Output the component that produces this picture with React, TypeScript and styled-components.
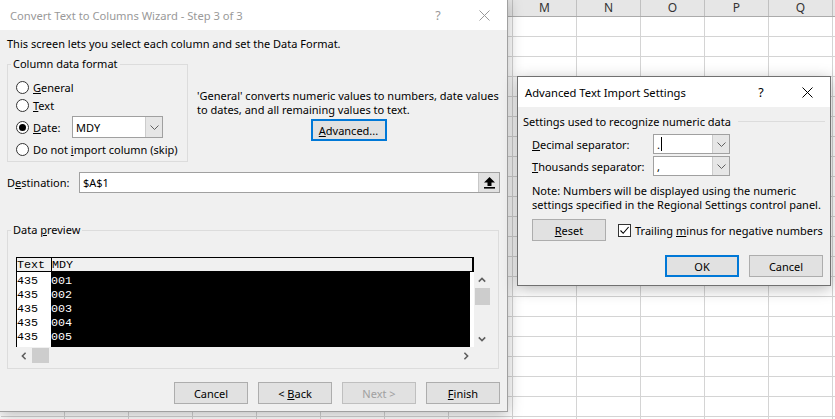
import React from "react";
import styled, { createGlobalStyle } from "styled-components";

const UI = `"Noto Sans", "Open Sans", "Liberation Sans", sans-serif`;
const MONO = `"Liberation Mono", "DejaVu Sans Mono", monospace`;

const GlobalStyle = createGlobalStyle`
  html, body { margin: 0; padding: 0; background: #ffffff; overflow: hidden; }
  body { font-family: ${UI}; font-size: 11px; color: #000; }
  *, *::before, *::after { box-sizing: border-box; }
`;

const Desktop = styled.div`
  position: relative;
  width: 835px;
  height: 419px;
  overflow: hidden;
  background: #fff;
`;

/* ---------- spreadsheet behind ---------- */
const Sheet = styled.div`
  display: flex;
  flex-direction: column;
  padding-left: 1px;
`;
const ColHeaderRow = styled.div`
  display: flex;
  height: 17px;
  background: #e6e6e6;
  border-bottom: 1px solid #ababab;
`;
const ColHeader = styled.div`
  flex: 0 0 64px;
  border-right: 1px solid #c0c0c0;
  text-align: center;
  font-size: 12px;
  line-height: 15px;
  color: #333;
`;
const SheetRow = styled.div`
  display: flex;
  height: 20px;
`;
const Cell = styled.div`
  flex: 0 0 64px;
  border-right: 1px solid #d4d4d4;
  border-bottom: 1px solid #d4d4d4;
`;

/* ---------- windows ---------- */
const Window = styled.div<{ $active?: boolean }>`
  position: absolute;
  display: flex;
  flex-direction: column;
  background: #f0f0f0;
  border: 1px solid ${(p) => (p.$active ? "#707070" : "#a0a0a0")};
  box-shadow: 0 3px 14px rgba(0, 0, 0, 0.28);
`;
const WizardWindow = styled(Window)`
  left: -1px;
  top: -1px;
  width: 509px;
  height: 413px;
`;
const AdvWindow = styled(Window)`
  left: 517px;
  top: 76px;
  width: 314px;
  height: 210px;
`;
const TitleBar = styled.div<{ $active?: boolean; $pad: number }>`
  flex: none;
  height: 30px;
  display: flex;
  align-items: center;
  background: #fff;
  padding-left: ${(p) => p.$pad}px;
  color: ${(p) => (p.$active ? "#000" : "#999")};
  font-size: 11.2px;
`;
const TitleText = styled.div`
  flex: 1;
  white-space: nowrap;
`;
const TitleButton = styled.div`
  width: 46px;
  height: 30px;
  display: flex;
  align-items: center;
  justify-content: center;
  font-size: 12.5px;
`;

const CloseIcon = ({ color }: { color: string }) => (
  <svg width="11" height="11" viewBox="0 0 11 11">
    <path d="M0.5 0.5 L10.5 10.5 M10.5 0.5 L0.5 10.5" stroke={color} strokeWidth="1" fill="none" />
  </svg>
);

/* ---------- common controls ---------- */
const Key = styled.span`
  text-decoration: underline;
  text-underline-offset: 1px;
`;
const PushButton = styled.button<{ $default?: boolean; $w?: number }>`
  flex: none;
  width: ${(p) => p.$w ?? 74}px;
  height: 22px;
  margin: 0;
  padding: 0;
  font: inherit;
  color: #000;
  background: #e1e1e1;
  border: ${(p) => (p.$default ? "2px solid #0078d7" : "1px solid #adadad")};
  &:disabled {
    color: #a0a0a0;
    border-color: #bfbfbf;
  }
`;
const GroupBox = styled.fieldset<{ $w: number }>`
  margin: 0;
  padding: 0;
  min-width: 0;
  width: ${(p) => p.$w}px;
  border: 1px solid #dcdcdc;
`;
const Legend = styled.legend`
  margin-left: 3px;
  padding: 0 2px;
  line-height: 16px;
  font-size: 11px;
`;
const Combo = styled.div<{ $w: number; $h: number }>`
  flex: none;
  display: flex;
  width: ${(p) => p.$w}px;
  height: ${(p) => p.$h}px;
  border: 1px solid #a0a0a0;
  background: #fff;
`;
const ComboText = styled.div`
  flex: 1;
  display: flex;
  align-items: center;
  padding-left: 3px;
`;
const ComboDrop = styled.div`
  flex: none;
  width: 17px;
  display: flex;
  align-items: center;
  justify-content: center;
  background: #e6e6e6;
  border-left: 1px solid #cccccc;
`;
const Caret = styled.span`
  display: inline-block;
  width: 1px;
  height: 14px;
  margin-left: 1px;
  background: #000;
`;

const Chevron = ({ dir, color = "#606060" }: { dir: "up" | "down" | "left" | "right"; color?: string }) => {
  const rot = { up: 0, right: 90, down: 180, left: 270 }[dir];
  return (
    <svg width="8" height="8" viewBox="0 0 8 8" style={{ transform: `rotate(${rot}deg)` }}>
      <path d="M0.8 5.6 L4 2.4 L7.2 5.6" stroke={color} strokeWidth="1.6" fill="none" />
    </svg>
  );
};
const ThinChevronDown = () => (
  <svg width="9" height="5" viewBox="0 0 9 5">
    <path d="M0.5 0.5 L4.5 4.5 L8.5 0.5" stroke="#606060" strokeWidth="1" fill="none" />
  </svg>
);

/* ---------- wizard ---------- */
const WizardBody = styled.div`
  flex: 1;
  display: flex;
  flex-direction: column;
  padding: 6px 7px 8px 7px;
`;
const Intro = styled.div`
  line-height: 16px;
  height: 16px;
  white-space: nowrap;
`;
const TopRow = styled.div`
  display: flex;
  align-items: flex-start;
  margin-top: 4px;
`;
const Options = styled.div`
  display: flex;
  flex-direction: column;
  padding: 6px 0 3px 8px;
`;
const OptionRow = styled.div<{ $h?: number; $gap?: number }>`
  display: flex;
  align-items: center;
  height: ${(p) => p.$h ?? 18}px;
  margin-top: ${(p) => p.$gap ?? 0}px;
  white-space: nowrap;
`;
const Radio = styled.span<{ $checked?: boolean }>`
  flex: none;
  width: 13px;
  height: 13px;
  margin-right: 4px;
  border-radius: 50%;
  border: 1px solid #333;
  background: #fff;
  display: flex;
  align-items: center;
  justify-content: center;
  &::after {
    content: "";
    display: ${(p) => (p.$checked ? "block" : "none")};
    width: 7px;
    height: 7px;
    border-radius: 50%;
    background: #000;
  }
`;
const DateLabel = styled.span`
  width: 39px;
`;
const Describe = styled.div`
  flex: 1;
  margin-left: 9px;
  padding-top: 33px;
  display: flex;
  flex-direction: column;
  align-items: center;
`;
const DescText = styled.div`
  align-self: stretch;
  line-height: 14px;
  white-space: nowrap;
`;
const AdvancedButton = styled(PushButton)`
  margin-top: 2px;
`;
const DestRow = styled.div`
  display: flex;
  align-items: center;
  margin-top: 10px;
  height: 21px;
`;
const DestLabel = styled.div`
  width: 72px;
`;
const DestInput = styled.div`
  display: flex;
  width: 421px;
  height: 21px;
  border: 1px solid #a0a0a0;
  background: #fff;
`;
const DestText = styled.div`
  flex: 1;
  padding-left: 3px;
  line-height: 19px;
`;
const CollapseBtn = styled.div`
  width: 21px;
  display: flex;
  align-items: center;
  justify-content: center;
  background: #e1e1e1;
  border-left: 1px solid #c8c8c8;
`;
const PreviewGroup = styled(GroupBox)`
  margin-top: 29px;
`;
const PreviewInner = styled.div`
  padding: 19px 6px 4px 8px;
`;
const Preview = styled.div`
  display: grid;
  grid-template-columns: 458px 17px;
  grid-template-rows: 15px 75px 17px;
`;
const PHeader = styled.div`
  display: flex;
  background: #f0f0f0;
  border: 1px solid #000;
  border-right-width: 2px;
  font-family: ${MONO};
  font-size: 11.7px;
`;
const PHeadCell = styled.div<{ $w?: number }>`
  ${(p) => (p.$w ? `width: ${p.$w}px; border-right: 1px solid #000;` : "flex: 1;")}
  display: flex;
  align-items: flex-end;
  line-height: 11px;
  white-space: nowrap;
`;
const PBody = styled.div`
  display: flex;
  border-left: 1px solid #000;
  font-family: ${MONO};
  font-size: 11.7px;
`;
const PCol = styled.div<{ $dark?: boolean; $w?: number }>`
  ${(p) => (p.$w ? `width: ${p.$w}px;` : "flex: 1;")}
  background: ${(p) => (p.$dark ? "#000" : "#fff")};
  color: ${(p) => (p.$dark ? "#fff" : "#000")};
  padding-top: 2px;
  line-height: 14px;
  white-space: pre;
`;
const PStrip = styled.div`
  width: 4px;
  background: #fff;
`;
const VScroll = styled.div`
  display: flex;
  flex-direction: column;
  background: #f0f0f0;
`;
const HScroll = styled.div`
  display: flex;
  align-items: center;
  background: #f0f0f0;
`;
const ScrollArrow = styled.div`
  flex: none;
  width: 16px;
  height: 16px;
  display: flex;
  align-items: center;
  justify-content: center;
`;
const VThumb = styled.div`
  height: 17px;
  width: 15px;
  margin-left: 1px;
  background: #cdcdcd;
`;
const HThumb = styled.div`
  width: 17px;
  height: 15px;
  background: #cdcdcd;
`;
const Spacer = styled.div`
  flex: 1;
`;
const Footer = styled.div`
  display: flex;
  justify-content: flex-end;
  gap: 10px;
  margin-top: 13px;
`;

/* ---------- advanced dialog ---------- */
const AdvBody = styled.div`
  flex: 1;
  display: flex;
  flex-direction: column;
  padding: 6px 5px 0 5px;
`;
const SectionHead = styled.div`
  display: flex;
  align-items: center;
  height: 16px;
  white-space: nowrap;
`;
const SectionLine = styled.div`
  flex: 1;
  height: 1px;
  margin-left: 7px;
  background: #dcdcdc;
`;
const FieldRow = styled.div<{ $gap: number }>`
  display: flex;
  align-items: center;
  height: 20px;
  margin: ${(p) => p.$gap}px 0 0 9px;
`;
const FieldLabel = styled.div`
  width: 121px;
  white-space: nowrap;
`;
const Note = styled.div`
  margin: 8px 0 0 9px;
  line-height: 14px;
  white-space: nowrap;
`;
const ResetRow = styled.div`
  display: flex;
  align-items: center;
  margin: 7px 0 0 9px;
  white-space: nowrap;
`;
const CheckBox = styled.span`
  flex: none;
  width: 13px;
  height: 13px;
  margin: 0 4px 0 12px;
  border: 1px solid #333;
  background: #fff;
  display: flex;
  align-items: center;
  justify-content: center;
`;
const AdvFooter = styled.div`
  display: flex;
  justify-content: flex-end;
  gap: 10px;
  margin-top: 14px;
  padding-right: 2px;
`;

/* columns hidden under the wizard carry no visible label */
const columns = ["", "", "", "", "", "", "", "", "M", "N", "O", "P", "Q", ""];
const rows = Array.from({ length: 21 }, (_, i) => i);

export default function App() {
  return (
    <Desktop>
      <GlobalStyle />
      <Sheet>
        <ColHeaderRow>
          {columns.map((c, i) => (
            <ColHeader key={i}>{c}</ColHeader>
          ))}
        </ColHeaderRow>
        {rows.map((r) => (
          <SheetRow key={r}>
            {columns.map((_, i) => (
              <Cell key={i} />
            ))}
          </SheetRow>
        ))}
      </Sheet>

      <WizardWindow>
        <TitleBar $pad={10}>
          <TitleText>Convert Text to Columns Wizard - Step 3 of 3</TitleText>
          <TitleButton>?</TitleButton>
          <TitleButton>
            <CloseIcon color="#999" />
          </TitleButton>
        </TitleBar>
        <WizardBody>
          <Intro>This screen lets you select each column and set the Data Format.</Intro>
          <TopRow>
            <GroupBox $w={181}>
              <Legend>Column data format</Legend>
              <Options>
                <OptionRow>
                  <Radio />
                  <span>
                    <Key>G</Key>eneral
                  </span>
                </OptionRow>
                <OptionRow>
                  <Radio />
                  <span>
                    <Key>T</Key>ext
                  </span>
                </OptionRow>
                <OptionRow $h={22} $gap={2}>
                  <Radio $checked />
                  <DateLabel>
                    <Key>D</Key>ate:
                  </DateLabel>
                  <Combo $w={91} $h={22}>
                    <ComboText>MDY</ComboText>
                    <ComboDrop>
                      <ThinChevronDown />
                    </ComboDrop>
                  </Combo>
                </OptionRow>
                <OptionRow $gap={2}>
                  <Radio />
                  <span>
                    Do not <Key>i</Key>mport column (skip)
                  </span>
                </OptionRow>
              </Options>
            </GroupBox>
            <Describe>
              <DescText>
                'General' converts numeric values to numbers, date values
                <br />
                to dates, and all remaining values to text.
              </DescText>
              <AdvancedButton $default $w={76}>
                <Key>A</Key>dvanced...
              </AdvancedButton>
            </Describe>
          </TopRow>

          <DestRow>
            <DestLabel>
              D<Key>e</Key>stination:
            </DestLabel>
            <DestInput>
              <DestText>$A$1</DestText>
              <CollapseBtn>
                <svg width="13" height="13" viewBox="0 0 13 13">
                  <polygon points="6.5,1 12,6.5 8.5,6.5 8.5,10 4.5,10 4.5,6.5 1,6.5" fill="#000" />
                  <rect x="1" y="11" width="11" height="1.6" fill="#000" />
                </svg>
              </CollapseBtn>
            </DestInput>
          </DestRow>

          <PreviewGroup $w={492}>
            <Legend>
              Data <Key>p</Key>review
            </Legend>
            <PreviewInner>
              <Preview>
                <PHeader>
                  <PHeadCell $w={35}>Text</PHeadCell>
                  <PHeadCell>MDY</PHeadCell>
                </PHeader>
                <div />
                <PBody>
                  <PCol $w={34}>{"435\n435\n435\n435\n435"}</PCol>
                  <PCol $dark>{"001\n002\n003\n004\n005"}</PCol>
                  <PStrip />
                </PBody>
                <VScroll>
                  <ScrollArrow>
                    <Chevron dir="up" />
                  </ScrollArrow>
                  <VThumb />
                  <Spacer />
                  <ScrollArrow>
                    <Chevron dir="down" />
                  </ScrollArrow>
                </VScroll>
                <HScroll>
                  <ScrollArrow>
                    <Chevron dir="left" />
                  </ScrollArrow>
                  <HThumb />
                  <Spacer />
                  <ScrollArrow>
                    <Chevron dir="right" />
                  </ScrollArrow>
                </HScroll>
                <div />
              </Preview>
            </PreviewInner>
          </PreviewGroup>

          <Footer>
            <PushButton>Cancel</PushButton>
            <PushButton>
              &lt; <Key>B</Key>ack
            </PushButton>
            <PushButton disabled>Next &gt;</PushButton>
            <PushButton>
              <Key>F</Key>inish
            </PushButton>
          </Footer>
        </WizardBody>
      </WizardWindow>

      <AdvWindow $active>
        <TitleBar $pad={7} $active>
          <TitleText>Advanced Text Import Settings</TitleText>
          <TitleButton>?</TitleButton>
          <TitleButton>
            <CloseIcon color="#000" />
          </TitleButton>
        </TitleBar>
        <AdvBody>
          <SectionHead>
            Settings used to recognize numeric data
            <SectionLine />
          </SectionHead>
          <FieldRow $gap={5}>
            <FieldLabel>
              <Key>D</Key>ecimal separator:
            </FieldLabel>
            <Combo $w={77} $h={20}>
              <ComboText>
                .<Caret />
              </ComboText>
              <ComboDrop>
                <ThinChevronDown />
              </ComboDrop>
            </Combo>
          </FieldRow>
          <FieldRow $gap={2}>
            <FieldLabel>
              <Key>T</Key>housands separator:
            </FieldLabel>
            <Combo $w={77} $h={20}>
              <ComboText>,</ComboText>
              <ComboDrop>
                <ThinChevronDown />
              </ComboDrop>
            </Combo>
          </FieldRow>
          <Note>
            Note: Numbers will be displayed using the numeric
            <br />
            settings specified in the Regional Settings control panel.
          </Note>
          <ResetRow>
            <PushButton>
              <Key>R</Key>eset
            </PushButton>
            <CheckBox>
              <svg width="11" height="11" viewBox="0 0 11 11">
                <path d="M1.5 5.5 L4.2 8.3 L9.6 2" stroke="#000" strokeWidth="1.1" fill="none" />
              </svg>
            </CheckBox>
            <span>
              Trailing <Key>m</Key>inus for negative numbers
            </span>
          </ResetRow>
          <AdvFooter>
            <PushButton $default>OK</PushButton>
            <PushButton>Cancel</PushButton>
          </AdvFooter>
        </AdvBody>
      </AdvWindow>
    </Desktop>
  );
}
